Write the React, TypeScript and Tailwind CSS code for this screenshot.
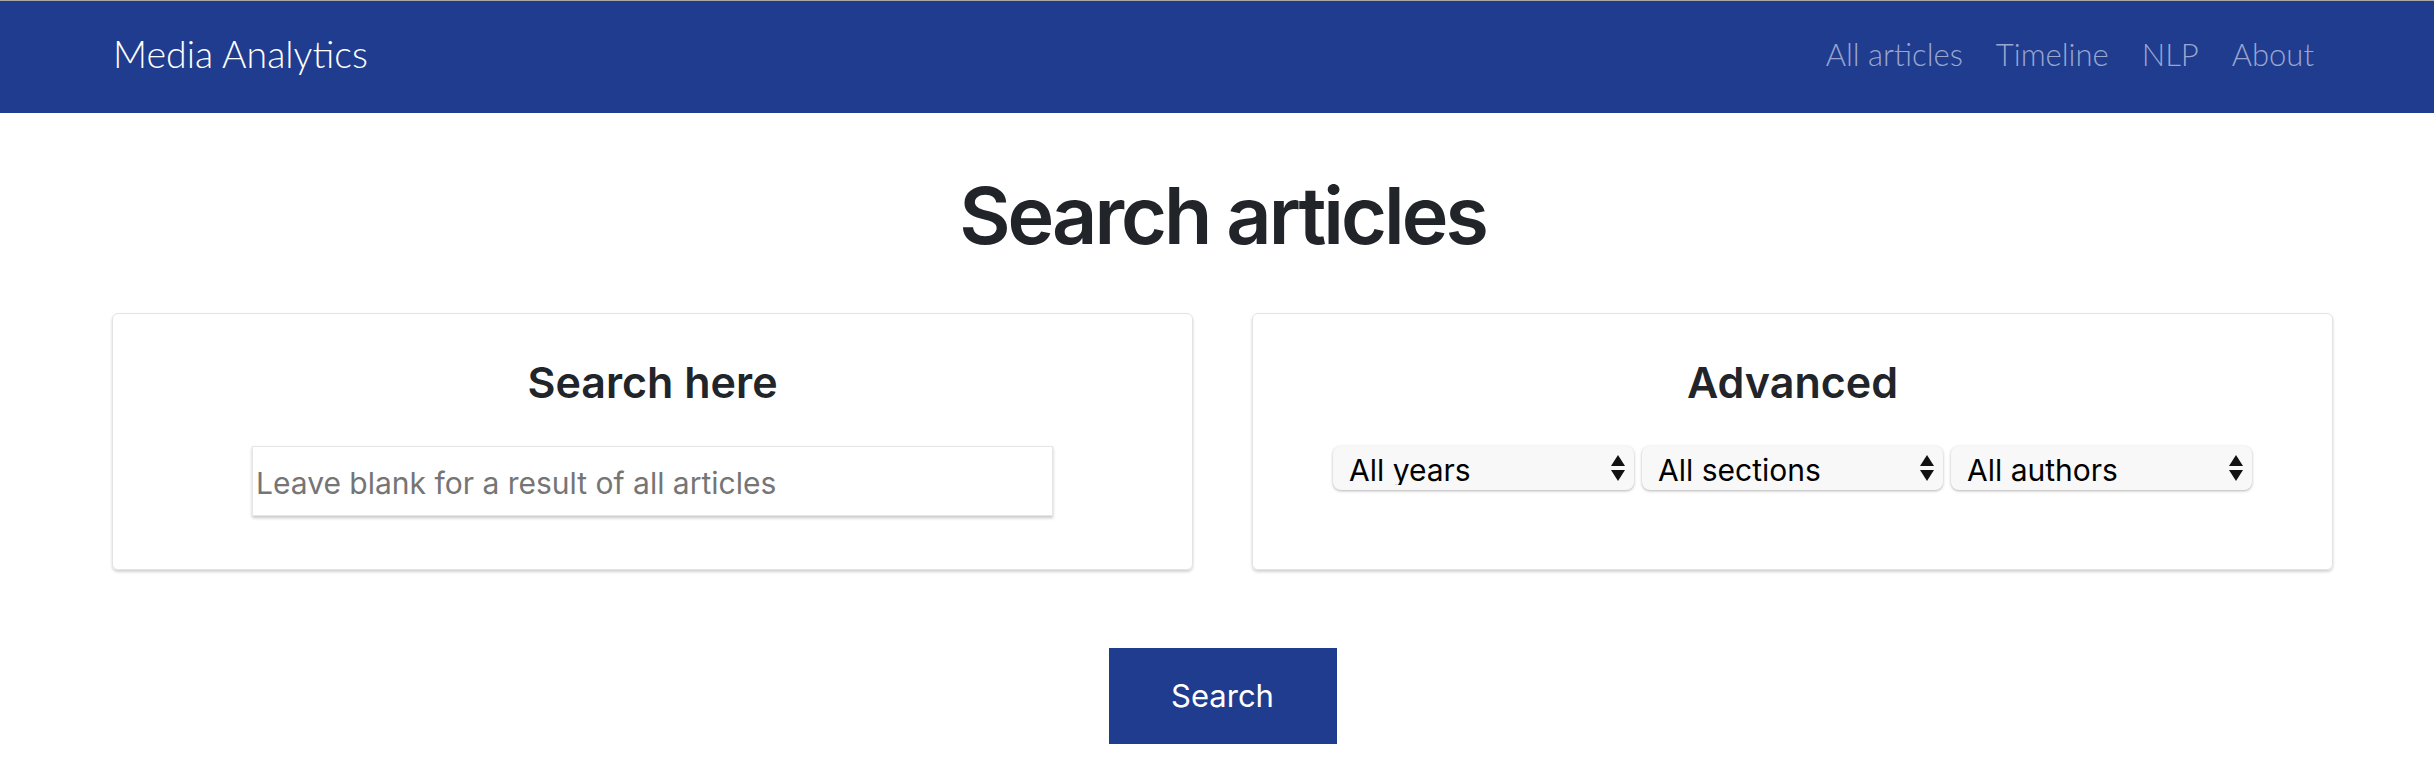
import React from 'react'

const navLinks = ['All articles', 'Timeline', 'NLP', 'About']

const filters = ['All years', 'All sections', 'All authors']

// up/down arrows drawn like the native select control
const SelectArrows = () => (
    <svg width="14" height="27" viewBox="0 0 14 27" className="pointer-events-none absolute right-[9px] top-[9px]">
        <path d="M7 0 L14 11 L0 11 Z" fill="#111" />
        <path d="M0 15 L14 15 L7 26 Z" fill="#111" />
    </svg>
)

const Navbar = () => (
    <nav className="flex h-[113px] items-center justify-between border-t border-[#a9a9a9] bg-[#1f3c8e] pb-[5px] pl-[113px] pr-[120px] font-['Lato',sans-serif]">
        <a href="#" className="text-[37.5px] font-light text-white">Media Analytics</a>
        <ul className="flex gap-[33px]">
            {navLinks.map(link => (
                <li key={link}>
                    <a href="#" className="text-[31px] font-light text-[#9aa6cf]">{link}</a>
                </li>
            ))}
        </ul>
    </nav>
)

export default function App() {
    return (
        <div className="min-h-screen bg-white font-['Inter',sans-serif] text-[#212529]">
            <Navbar />

            <main className="pl-[112px] pr-[101px]">
                <h1 className="mt-[55px] text-center text-[79px] font-semibold leading-[1.2] tracking-[-3px]">
                    Search articles
                </h1>

                <div className="mt-[50px] grid grid-cols-2 gap-[59px]">
                    {/* simple search */}
                    <section className="rounded-md border border-[#e3e3e3] pt-[43px] pb-[53px] shadow-[0_2px_3px_rgba(0,0,0,0.18)]">
                        <h2 className="text-center text-[43px] font-semibold leading-[1.2]">Search here</h2>
                        <input
                            type="text"
                            placeholder="Leave blank for a result of all articles"
                            className="mx-auto mt-[38px] block h-[70px] w-[801px] border border-[#e6e6e6] px-[3px] pt-[3px] text-[30px] text-black shadow-[0_2px_3px_rgba(0,0,0,0.22)] outline-none placeholder:text-[#757575]"
                        />
                    </section>

                    {/* advanced filters */}
                    <section className="rounded-md border border-[#e3e3e3] pt-[43px] pb-[53px] shadow-[0_2px_3px_rgba(0,0,0,0.18)]">
                        <h2 className="text-center text-[43px] font-semibold leading-[1.2]">Advanced</h2>
                        <div className="mt-[38px] flex justify-center gap-[8px]">
                            {filters.map(f => (
                                <div key={f} className="relative">
                                    <select className="h-[44px] w-[301px] appearance-none rounded-lg bg-[#f8f8f8] pl-[16px] pt-[3px] text-[30px] leading-none text-black shadow-[0_1px_3px_rgba(0,0,0,0.3)] outline-none">
                                        <option>{f}</option>
                                    </select>
                                    <SelectArrows />
                                </div>
                            ))}
                        </div>
                    </section>
                </div>

                <div className="mt-[78px] flex justify-center">
                    <button className="h-[96px] w-[228px] bg-[#1f3c8e] text-[31px] text-white">Search</button>
                </div>
            </main>
        </div>
    )
}
